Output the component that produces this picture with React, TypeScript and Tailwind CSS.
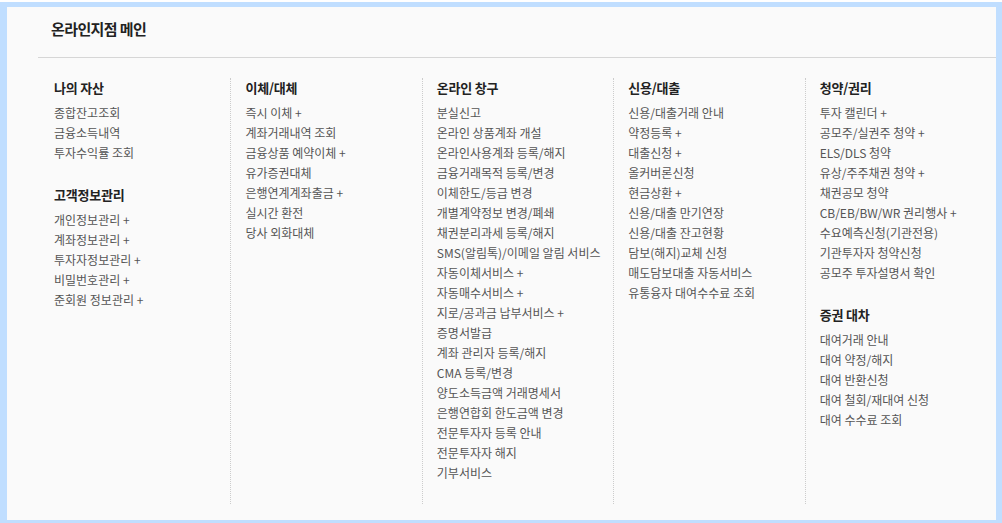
import React from "react";

type Section = { title: string; items: string[] };

const columns: Section[][] = [
  [
    { title: "나의 자산", items: ["종합잔고조회", "금융소득내역", "투자수익률 조회"] },
    {
      title: "고객정보관리",
      items: ["개인정보관리 +", "계좌정보관리 +", "투자자정보관리 +", "비밀번호관리 +", "준회원 정보관리 +"],
    },
  ],
  [
    {
      title: "이체/대체",
      items: [
        "즉시 이체 +",
        "계좌거래내역 조회",
        "금융상품 예약이체 +",
        "유가증권대체",
        "은행연계계좌출금 +",
        "실시간 환전",
        "당사 외화대체",
      ],
    },
  ],
  [
    {
      title: "온라인 창구",
      items: [
        "분실신고",
        "온라인 상품계좌 개설",
        "온라인사용계좌 등록/해지",
        "금융거래목적 등록/변경",
        "이체한도/등급 변경",
        "개별계약정보 변경/폐쇄",
        "채권분리과세 등록/해지",
        "SMS(알림톡)/이메일 알림 서비스",
        "자동이체서비스 +",
        "자동매수서비스 +",
        "지로/공과금 납부서비스 +",
        "증명서발급",
        "계좌 관리자 등록/해지",
        "CMA 등록/변경",
        "양도소득금액 거래명세서",
        "은행연합회 한도금액 변경",
        "전문투자자 등록 안내",
        "전문투자자 해지",
        "기부서비스",
      ],
    },
  ],
  [
    {
      title: "신용/대출",
      items: [
        "신용/대출거래 안내",
        "약정등록 +",
        "대출신청 +",
        "올커버론신청",
        "현금상환 +",
        "신용/대출 만기연장",
        "신용/대출 잔고현황",
        "담보(해지)교체 신청",
        "매도담보대출 자동서비스",
        "유통융자 대여수수료 조회",
      ],
    },
  ],
  [
    {
      title: "청약/권리",
      items: [
        "투자 캘린더 +",
        "공모주/실권주 청약 +",
        "ELS/DLS 청약",
        "유상/주주채권 청약 +",
        "채권공모 청약",
        "CB/EB/BW/WR 권리행사 +",
        "수요예측신청(기관전용)",
        "기관투자자 청약신청",
        "공모주 투자설명서 확인",
      ],
    },
    {
      title: "증권 대차",
      items: ["대여거래 안내", "대여 약정/해지", "대여 반환신청", "대여 철회/재대여 신청", "대여 수수료 조회"],
    },
  ],
];

export default function App() {
  return (
    <div
      className="h-[523px] w-[1002px] overflow-hidden bg-white pt-[2px]"
      style={{ fontFamily: '"Noto Sans CJK KR", "Noto Sans", sans-serif' }}
    >
      <div className="h-[521px] border-t-[5px] border-r-[6px] border-b-[3px] border-l-[7px] border-[#c0deff] bg-[#fafafa]">
        <div className="ml-[31px] h-[51px] border-b border-[#d6d6d6] pl-[13px] pt-[12px]">
          <h1 className="text-[15px] font-bold leading-[20px] tracking-[-0.6px] text-[#222]">온라인지점 메인</h1>
        </div>

        <div className="ml-[32px] mt-[20px] flex">
          {columns.map((sections, ci) => (
            <div
              key={ci}
              className={
                ci === 0
                  ? "h-[426px] w-[192px] border-l border-transparent pl-[14px]"
                  : "h-[426px] w-[192px] border-l border-dotted border-[#cccccc] pl-[14px]"
              }
            >
              {sections.map((section, si) => (
                <div key={section.title} className={si > 0 ? "mt-[22px]" : ""}>
                  <h2 className="text-[13px] font-bold leading-[20px] tracking-[-0.2px] text-[#222]">
                    {section.title}
                  </h2>
                  <ul className="mt-[5px]">
                    {section.items.map((item) => (
                      <li
                        key={item}
                        className="whitespace-nowrap text-[12px] leading-[20px] tracking-[0px] text-[#555]"
                      >
                        {item}
                      </li>
                    ))}
                  </ul>
                </div>
              ))}
            </div>
          ))}
        </div>
      </div>
    </div>
  );
}
